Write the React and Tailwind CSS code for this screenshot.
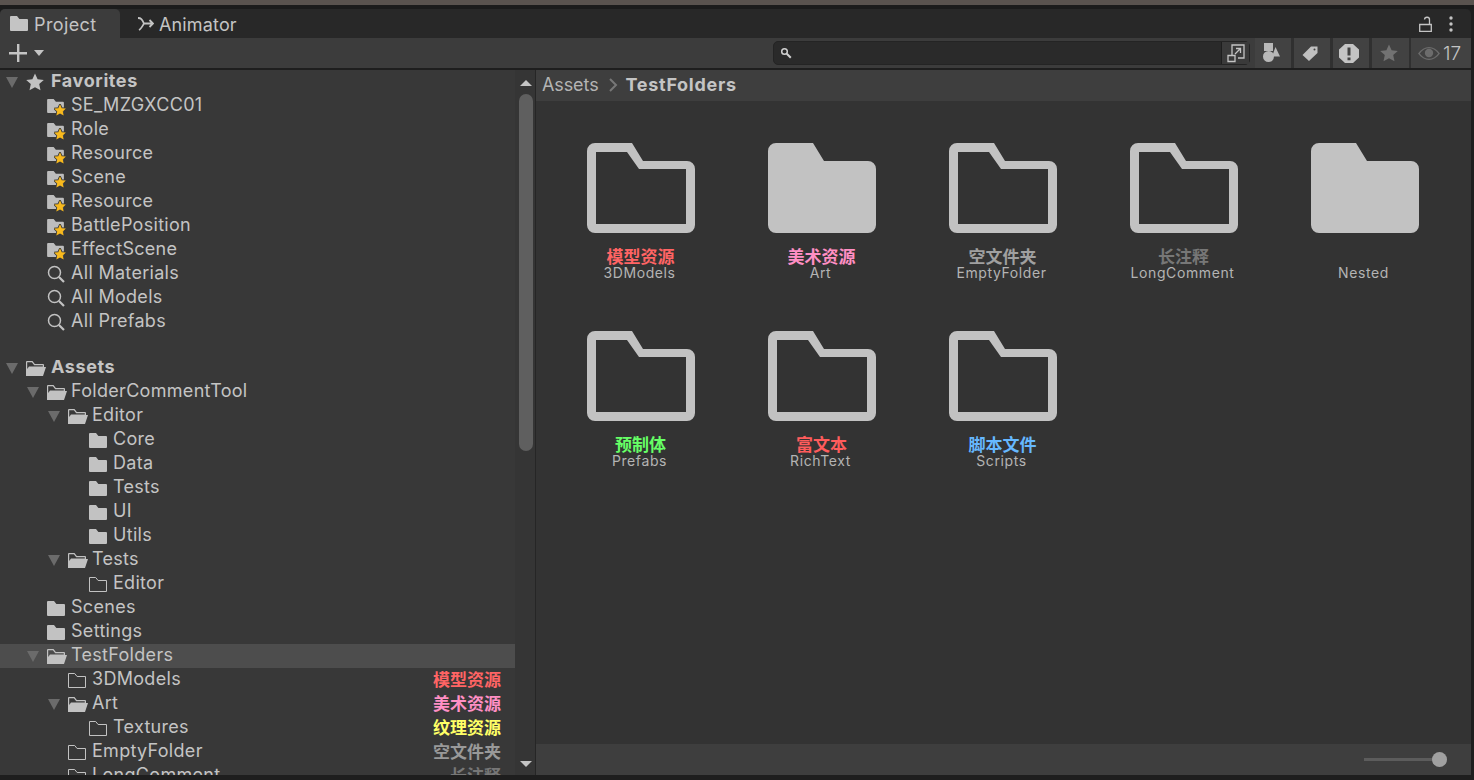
import React from "react";

const DEPTH = ["pl-0", "pl-[21px]", "pl-[42px]", "pl-[63px]"];

const favorites = [
  { name: "SE_MZGXCC01", icon: "fav" },
  { name: "Role", icon: "fav" },
  { name: "Resource", icon: "fav" },
  { name: "Scene", icon: "fav" },
  { name: "Resource", icon: "fav" },
  { name: "BattlePosition", icon: "fav" },
  { name: "EffectScene", icon: "fav" },
  { name: "All Materials", icon: "search" },
  { name: "All Models", icon: "search" },
  { name: "All Prefabs", icon: "search" },
];

const assets = [
  { name: "FolderCommentTool", depth: 1, icon: "open", arrow: true },
  { name: "Editor", depth: 2, icon: "open", arrow: true },
  { name: "Core", depth: 3, icon: "closed" },
  { name: "Data", depth: 3, icon: "closed" },
  { name: "Tests", depth: 3, icon: "closed" },
  { name: "UI", depth: 3, icon: "closed" },
  { name: "Utils", depth: 3, icon: "closed" },
  { name: "Tests", depth: 2, icon: "open", arrow: true },
  { name: "Editor", depth: 3, icon: "empty" },
  { name: "Scenes", depth: 1, icon: "closed" },
  { name: "Settings", depth: 1, icon: "closed" },
  { name: "TestFolders", depth: 1, icon: "open", arrow: true, selected: true },
  { name: "3DModels", depth: 2, icon: "empty", note: "模型资源", noteClass: "text-[#ff6464]" },
  { name: "Art", depth: 2, icon: "open", arrow: true, note: "美术资源", noteClass: "text-[#ff8fc4]" },
  { name: "Textures", depth: 3, icon: "empty", note: "纹理资源", noteClass: "text-[#ffff66]" },
  { name: "EmptyFolder", depth: 2, icon: "empty", note: "空文件夹", noteClass: "text-[#999999]" },
  { name: "LongComment", depth: 2, icon: "empty", note: "长注释", noteClass: "text-[#777777]" },
];

const grid = [
  { name: "3DModels", note: "模型资源", noteClass: "text-[#ff6464]" },
  { name: "Art", note: "美术资源", noteClass: "text-[#ff8fc4]", solid: true },
  { name: "EmptyFolder", note: "空文件夹", noteClass: "text-[#a0a0a0]" },
  { name: "LongComment", note: "长注释", noteClass: "text-[#777777]" },
  { name: "Nested", note: "", solid: true },
  { name: "Prefabs", note: "预制体", noteClass: "text-[#66ff66]" },
  { name: "RichText", note: "富文本", noteClass: "text-[#ff5c5c]" },
  { name: "Scripts", note: "脚本文件", noteClass: "text-[#66b8ff]" },
];

function Arrow() {
  return (
    <svg width="12" height="11" viewBox="0 0 12 11">
      <path d="M0 0H12L6 11Z" fill="#6b6b6b" />
    </svg>
  );
}

function SearchIcon() {
  return (
    <svg width="20" height="20" viewBox="0 0 20 20" fill="none" stroke="#c2c2c2">
      <circle cx="7.5" cy="8.5" r="6" strokeWidth="1.5" />
      <path d="M12 13l5 5" strokeWidth="2.2" />
    </svg>
  );
}

function StarGlyph({ size = 18, color = "#c2c2c2", stroke }) {
  return (
    <svg width={size} height={size} viewBox="0 0 18 18">
      <path
        d="M9 0.5l2.600 5.700 6.200.7-4.600 4.200 1.300 6.200L9 14.200l-5.500 3.100 1.300-6.200L.2 6.900l6.200-.7z"
        fill={color}
        stroke={stroke}
        strokeWidth={stroke ? 2.500 : 0}
        paintOrder="stroke"
      />
    </svg>
  );
}

function ClosedFolder() {
  return (
    <svg width="18" height="15" viewBox="0 0 18 15">
      <path d="M0 1a1 1 0 0 1 1-1h6l2.400 3H17a1 1 0 0 1 1 1v10a1 1 0 0 1-1 1H1a1 1 0 0 1-1-1z" fill="#c2c2c2" />
    </svg>
  );
}

function EmptyFolder() {
  return (
    <svg width="18" height="15" viewBox="0 0 18 15" fill="none">
      <path d="M.5.5h6.200l2.400 3h8.400v11H.5z" stroke="#c2c2c2" />
    </svg>
  );
}

function OpenFolder() {
  return (
    <svg width="20" height="15" viewBox="0 0 20 15">
      <path
        fillRule="evenodd"
        d="M0 1a1 1 0 0 1 1-1h5.500l2.300 3H17a1 1 0 0 1 1 1v2h2l-3 9H0zM1.200 1.200V8L3 5.500h13.800V4.200H8.200L5.900 1.200z"
        fill="#c2c2c2"
      />
    </svg>
  );
}

function FavFolder() {
  return (
    <div className="relative h-[15px] w-[18px]">
      <svg width="17" height="14" viewBox="0 0 18 15">
        <path d="M0 1a1 1 0 0 1 1-1h6l2.400 3H17a1 1 0 0 1 1 1v10a1 1 0 0 1-1 1H1a1 1 0 0 1-1-1z" fill="#bdbdbd" />
      </svg>
      <div className="absolute right-[-1px] bottom-[-2px]">
        <StarGlyph size={12} color="#f7b91e" stroke="#383838" />
      </div>
    </div>
  );
}

function RowIcon({ type }) {
  if (type === "fav") return <FavFolder />;
  if (type === "search") return <SearchIcon />;
  if (type === "open") return <OpenFolder />;
  if (type === "empty") return <EmptyFolder />;
  return <ClosedFolder />;
}

function TreeRow({ item }) {
  return (
    <div className={`flex h-6 shrink-0 items-center ${DEPTH[item.depth]} ${item.selected ? "bg-[#4d4d4d]" : ""}`}>
      <div className="flex w-[26px] shrink-0 pl-[6px]">{item.arrow && <Arrow />}</div>
      <div className="flex w-5 shrink-0 items-center">
        <RowIcon type={item.icon} />
      </div>
      <span className="ml-1 pb-0.5 text-[18px] leading-6 tracking-[0.3px]">{item.name}</span>
      {item.note && (
        <span className={`ml-auto pr-[14px] text-[17px] font-bold leading-6 ${item.noteClass}`}>{item.note}</span>
      )}
    </div>
  );
}

function SectionRow({ name, icon }) {
  return (
    <div className="flex h-6 shrink-0 items-center">
      <div className="flex w-[26px] shrink-0 pl-[6px]">
        <Arrow />
      </div>
      <div className="flex w-5 shrink-0 items-center">{icon}</div>
      <span className="ml-[5px] pb-0.5 text-[18px] font-bold leading-6 tracking-[0.6px]">{name}</span>
    </div>
  );
}

function BigFolder({ solid }) {
  const outer =
    "M8 0H45L56 18H100a8 8 0 0 1 8 8V82a8 8 0 0 1-8 8H8a8 8 0 0 1-8-8V8a8 8 0 0 1 8-8Z";
  const inner = "M9 9V81H99V26H52L40 9Z";
  return (
    <svg width="108" height="90" viewBox="0 0 108 90">
      <path fillRule="evenodd" d={solid ? outer : `${outer}${inner}`} fill="#c2c2c2" />
    </svg>
  );
}

function GridItem({ item }) {
  return (
    <div className="flex h-[188px] flex-col items-center">
      <BigFolder solid={item.solid} />
      <div className={`mt-[14px] h-[19px] text-[17px] font-bold leading-[20px] ${item.noteClass || ""}`}>{item.note}</div>
      <div className="pr-0.5 text-[14px] leading-[14px] tracking-[0.6px] text-[#b4b4b4]">{item.name}</div>
    </div>
  );
}

function ToolButton({ children, className }) {
  return <div className={`flex h-[30px] items-center bg-[#424242] ${className}`}>{children}</div>;
}

function Toolbar() {
  return (
    <div className="flex h-[30px] shrink-0 items-center bg-[#3c3c3c]">
      <div className="flex items-center pl-[9px]">
        <svg width="18" height="18" viewBox="0 0 18 18">
          <path d="M8 0h2.400v8H18v2.400h-7.600V18H8v-7.600H0V8h8z" fill="#c4c4c4" />
        </svg>
        <svg className="ml-[7px]" width="10" height="6" viewBox="0 0 10 6">
          <path d="M0 0H10L5 6Z" fill="#c4c4c4" />
        </svg>
      </div>

      <div className="ml-[729px] flex h-6 w-[477px] items-center rounded-[5px] border border-[#242424] bg-[#2a2a2a]">
        <svg className="ml-[6px]" width="12" height="12" viewBox="0 0 12 12" fill="none" stroke="#d0d0d0">
          <circle cx="4.500" cy="4.500" r="2.800" strokeWidth="1.500" />
          <path d="M6.800 6.800l4 4" strokeWidth="2" />
        </svg>
        <div className="ml-auto flex h-full w-7 items-center justify-center border-l border-[#1e1e1e] bg-[#3a3a3a]">
          <svg width="20" height="20" viewBox="0 0 20 20" fill="none" stroke="#c4c4c4" strokeWidth="1.300">
            <path d="M6 12V2h12v13H12" />
            <path d="M2 12.500h7v6H2z" />
            <path d="M9 11l5-5M10 5.500h4.500V10" />
          </svg>
        </div>
      </div>

      <div className="ml-[5px] flex gap-[3px] bg-[#303030]">
        <ToolButton className="w-9 pl-2">
          <svg width="18" height="20" viewBox="0 0 18 20">
            <path d="M1 0h9v8H1z" fill="#b8b8b8" />
            <circle cx="5.500" cy="13.500" r="5.500" fill="#b8b8b8" />
            <path d="M12.500 4L17 13.500H9z" fill="#b8b8b8" />
          </svg>
        </ToolButton>
        <ToolButton className="w-9 pl-2">
          <svg width="16" height="15" viewBox="0 0 16 15">
            <path
              fillRule="evenodd"
              d="M9 .5h6.500V7L7 15 .5 9zM12.500 2.500a1 1 0 1 0 0 2 1 1 0 0 0 0-2z"
              fill="#c0c0c0"
            />
          </svg>
        </ToolButton>
        <ToolButton className="w-9 pl-1.5">
          <svg width="20" height="19" viewBox="0 0 20 19">
            <path
              fillRule="evenodd"
              d="M6 0h8l6 5.500v8L14 19H6l-6-5.500v-8zM8.500 3.500h3v8h-3zM8.500 13.500h3v2.800h-3z"
              fill="#c4c4c4"
            />
          </svg>
        </ToolButton>
        <ToolButton className="w-[37px] pl-2">
          <StarGlyph size={18} color="#727272" />
        </ToolButton>
        <ToolButton className="-ml-px w-[60px] pl-[7px]">
          <svg width="22" height="13" viewBox="0 0 22 13">
            <path
              fillRule="evenodd"
              d="M0 6.500C3 2.300 7 0 11 0s8 2.300 11 6.500C19 10.700 15 13 11 13S3 10.700 0 6.500zm11-5.300C7.500 1.200 4.200 3 1.800 6.500 4.200 10 7.500 11.800 11 11.800s6.800-1.800 9.200-5.300C17.800 3 14.500 1.200 11 1.200z"
              fill="#6c6c6c"
            />
            <circle cx="11" cy="6" r="4.200" fill="#6c6c6c" />
          </svg>
          <span className="ml-[3px] text-[19px] font-light leading-none text-[#c4c4c4]">17</span>
        </ToolButton>
      </div>
    </div>
  );
}

export default function App() {
  return (
    <div className="flex h-[780px] w-[1474px] flex-col overflow-hidden bg-[#1e1e1e] font-[Inter,'Noto_Sans_CJK_SC',sans-serif] text-[#c4c4c4]">
      <div className="h-[5px] shrink-0 bg-[#5a534f]" />
      <div className="h-1 shrink-0 bg-[#1c1c1c]" />

      <div className="flex min-h-0 flex-1 flex-col pr-[3px]">
        {/* Tabs */}
        <div className="flex h-[29px] shrink-0 items-stretch rounded-t-[5px] bg-[#282828]">
          <div className="flex w-[120px] items-center rounded-t-[5px] bg-[#3c3c3c] pl-[10px]">
            <svg width="18" height="15" viewBox="0 0 18 15">
              <path d="M0 1a1 1 0 0 1 1-1h6l2.400 3H17a1 1 0 0 1 1 1v10a1 1 0 0 1-1 1H1a1 1 0 0 1-1-1z" fill="#c4c4c4" />
            </svg>
            <span className="ml-[6px] pt-0.5 text-[18px] tracking-[0.4px]">Project</span>
          </div>
          <div className="ml-[18px] flex items-center">
            <svg width="16" height="14" viewBox="0 0 16 14" fill="none" stroke="#c4c4c4" strokeWidth="1.800">
              <path d="M0 1c3 0 4 1 6 5.500C4.500 9 3 12 1 13M6 6.500H15M11.500 3L15 6.500 11.500 10" />
            </svg>
            <span className="ml-[5px] pt-0.5 text-[18px] tracking-[0.15px]">Animator</span>
          </div>
          <div className="ml-auto flex items-center pr-[18px]">
            <svg width="14" height="16" viewBox="0 0 14 16" fill="none" stroke="#c4c4c4" strokeWidth="1.300">
              <path d="M.7 8.500h11.600v6.800H.7z" />
              <path d="M10.500 8.500V4a2.500 2.500 0 0 0-5-.5" />
            </svg>
            <svg className="ml-[16px]" width="4" height="16" viewBox="0 0 4 16">
              <circle cx="2" cy="2" r="1.700" fill="#c4c4c4" />
              <circle cx="2" cy="8" r="1.700" fill="#c4c4c4" />
              <circle cx="2" cy="14" r="1.700" fill="#c4c4c4" />
            </svg>
          </div>
        </div>

        <Toolbar />
        <div className="h-0.5 shrink-0 bg-[#1e1e1e]" />

        {/* Body */}
        <div className="flex min-h-0 flex-1">
          <div className="flex w-[515px] shrink-0 flex-col overflow-hidden bg-[#383838]">
            <SectionRow name="Favorites" icon={<StarGlyph />} />
            {favorites.map((item, i) => (
              <TreeRow key={i} item={{ ...item, depth: 1 }} />
            ))}
            <div className="h-[22px] shrink-0" />
            <SectionRow name="Assets" icon={<OpenFolder />} />
            {assets.map((item, i) => (
              <TreeRow key={i} item={item} />
            ))}
          </div>

          {/* Scrollbar */}
          <div className="flex w-[21px] shrink-0 flex-col items-center border-r border-[#262626] bg-[#353535] pl-0.5">
            <svg className="mt-[10px]" width="12" height="6" viewBox="0 0 12 6">
              <path d="M0 6L6 0l6 6z" fill="#c4c4c4" />
            </svg>
            <div className="mt-[8px] h-[357px] w-[14px] rounded-[7px] bg-[#5f5f5f]" />
            <svg className="mt-auto mb-[8px]" width="12" height="6" viewBox="0 0 12 6">
              <path d="M0 0h12L6 6z" fill="#c4c4c4" />
            </svg>
          </div>

          {/* Right side */}
          <div className="flex min-w-0 flex-1 flex-col bg-[#333333]">
            <div className="flex h-[31px] shrink-0 items-center bg-[#3e3e3e] pb-0.5 pl-[6px] text-[18px]">
              <span className="tracking-[-0.1px] text-[#b4b4b4]">Assets</span>
              <svg className="ml-[10px] mr-[8px]" width="9" height="14" viewBox="0 0 9 14" fill="none" stroke="#777777" strokeWidth="2">
                <path d="M1 1l6 6-6 6" />
              </svg>
              <span className="font-bold tracking-[0.7px]">TestFolders</span>
            </div>
            <div className="min-h-0 flex-1 pl-[14px] pt-[42px]">
              <div className="grid grid-cols-[repeat(5,181px)]">
                {grid.map((item) => (
                  <GridItem key={item.name} item={item} />
                ))}
              </div>
            </div>
            <div className="flex h-[31px] shrink-0 items-center justify-end bg-[#3e3e3e] pr-6">
              <div className="h-[3px] w-[69px] bg-[#5c5c5c]" />
              <div className="-ml-px size-[15px] rounded-full bg-[#a0a0a0]" />
            </div>
          </div>
        </div>
      </div>

      <div className="h-[5px] shrink-0 bg-[#1e1e1e]" />
    </div>
  );
}
